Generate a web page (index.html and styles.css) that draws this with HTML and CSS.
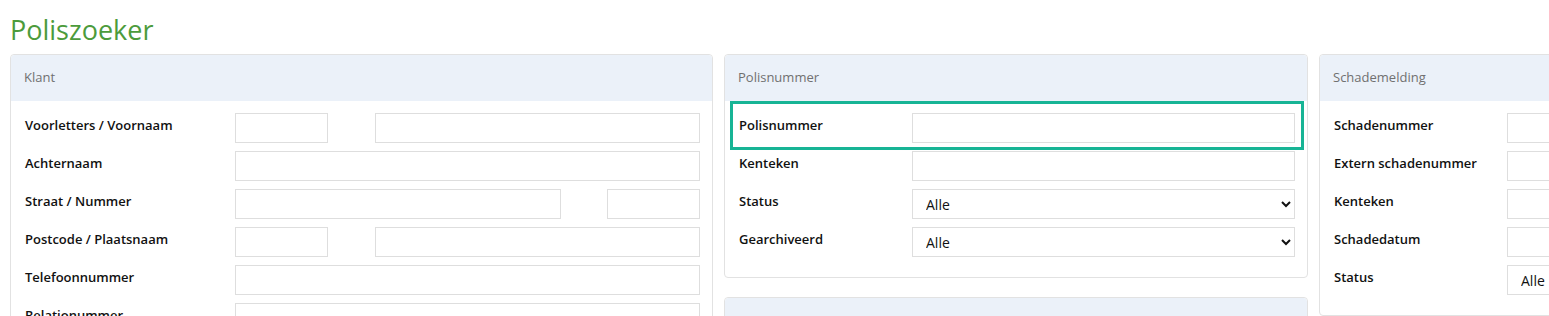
FILE: index.html
```html
<!DOCTYPE html>
<html lang="nl">
<head>
    <meta charset="UTF-8">
    <meta name="viewport" content="width=device-width, initial-scale=1.0">
    <title>Poliszoeker</title>
    <link rel="stylesheet" href="styles.css">
</head>
<body>
    <h1 class="page-title">Poliszoeker</h1>

    <div class="columns">
        <!-- Klant -->
        <div class="col col-klant">
            <div class="card">
                <div class="card-header">Klant</div>
                <div class="card-body body-klant">
                    <div class="form-row">
                        <label>Voorletters / Voornaam</label>
                        <div class="split split-left">
                            <input type="text">
                            <input type="text">
                        </div>
                    </div>
                    <div class="form-row">
                        <label>Achternaam</label>
                        <input type="text">
                    </div>
                    <div class="form-row">
                        <label>Straat / Nummer</label>
                        <div class="split split-right">
                            <input type="text">
                            <input type="text">
                        </div>
                    </div>
                    <div class="form-row">
                        <label>Postcode / Plaatsnaam</label>
                        <div class="split split-left">
                            <input type="text">
                            <input type="text">
                        </div>
                    </div>
                    <div class="form-row">
                        <label>Telefoonnummer</label>
                        <input type="text">
                    </div>
                    <div class="form-row">
                        <label>Relationummer</label>
                        <input type="text">
                    </div>
                </div>
            </div>
        </div>

        <!-- Polisnummer -->
        <div class="col col-polis">
            <div class="card">
                <div class="card-header">Polisnummer</div>
                <div class="card-body body-polis">
                    <div class="highlight"></div>
                    <div class="form-row">
                        <label>Polisnummer</label>
                        <input type="text">
                    </div>
                    <div class="form-row">
                        <label>Kenteken</label>
                        <input type="text">
                    </div>
                    <div class="form-row">
                        <label>Status</label>
                        <select><option>Alle</option></select>
                    </div>
                    <div class="form-row">
                        <label>Gearchiveerd</label>
                        <select><option>Alle</option></select>
                    </div>
                </div>
            </div>

            <div class="card">
                <div class="card-header">Eigenaar</div>
                <div class="card-body body-polis"></div>
            </div>
        </div>

        <!-- Schademelding -->
        <div class="col col-schade">
            <div class="card">
                <div class="card-header">Schademelding</div>
                <div class="card-body body-polis">
                    <div class="form-row">
                        <label>Schadenummer</label>
                        <input type="text">
                    </div>
                    <div class="form-row">
                        <label>Extern schadenummer</label>
                        <input type="text">
                    </div>
                    <div class="form-row">
                        <label>Kenteken</label>
                        <input type="text">
                    </div>
                    <div class="form-row">
                        <label>Schadedatum</label>
                        <input type="text">
                    </div>
                    <div class="form-row">
                        <label>Status</label>
                        <select><option>Alle</option></select>
                    </div>
                </div>
            </div>
        </div>
    </div>
</body>
</html>
```

FILE: styles.css
```css
body {
    font-family: "Open Sans", "Liberation Sans", Arial, sans-serif;
    background-color: #fff;
    color: #111;
    margin: 0;
    padding: 0 10px;
    overflow: hidden;
}

.page-title {
    margin: 0;
    padding-top: 15px;
    height: 54px;
    box-sizing: border-box;
    font-size: 27px;
    line-height: 30px;
    font-weight: 400;
    color: #4c9b3c;
}

.columns {
    display: flex;
    gap: 11px;
}

.col {
    flex-shrink: 0;
}

.col-klant {
    width: 703px;
}

.col-polis {
    width: 584px;
}

.col-schade {
    width: 585px;
}

.card {
    border: 1px solid #e2e2e2;
    border-radius: 4px;
    background-color: #fff;
    margin-bottom: 19px;
}

.card-header {
    background-color: #ebf1f9;
    border-radius: 4px 4px 0 0;
    height: 46px;
    line-height: 44px;
    padding: 0 13px;
    font-size: 13px;
    color: #707070;
}

.card-body {
    position: relative;
    padding: 12px 12px 12px 14px;
}

.form-row {
    display: grid;
    align-items: start;
    margin-bottom: 8px;
}

.body-klant .form-row {
    grid-template-columns: 210px 1fr;
}

.body-polis .form-row {
    grid-template-columns: 173px 1fr;
}

label {
    font-size: 13px;
    font-weight: 600;
    line-height: 18px;
    padding-top: 3px;
    white-space: nowrap;
}

input, select {
    width: 100%;
    height: 30px;
    box-sizing: border-box;
    border: 1px solid #dedede;
    border-radius: 0;
    background-color: #fff;
    font-family: "Open Sans", "Liberation Sans", Arial, sans-serif;
    font-size: 14px;
    color: #111;
    padding: 0 9px;
    margin: 0;
}

.split {
    display: grid;
}

.split-left {
    grid-template-columns: 93px 1fr;
    column-gap: 47px;
}

.split-right {
    grid-template-columns: 1fr 93px;
    column-gap: 46px;
}

.highlight {
    position: absolute;
    left: 5px;
    top: 0;
    width: 574px;
    height: 49px;
    box-sizing: border-box;
    border: 3px solid #17b495;
    pointer-events: none;
}
```
